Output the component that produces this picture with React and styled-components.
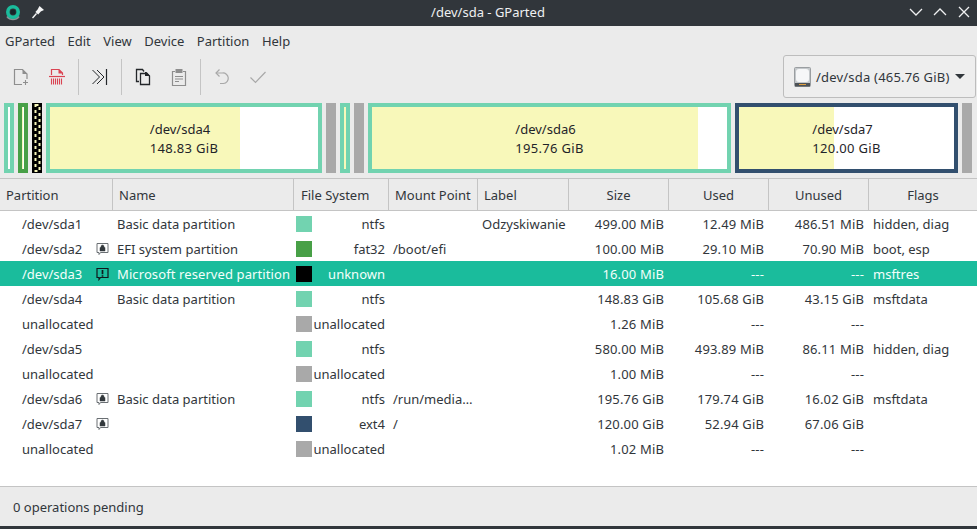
import React from 'react';
import styled, { createGlobalStyle } from 'styled-components';

const GlobalStyle = createGlobalStyle`
  html, body { margin: 0; padding: 0; height: 100%; overflow: hidden; }
  #root { height: 100%; }
  * { box-sizing: border-box; }
`;

const COLUMNS = '113px 181px 95px 89px 91px 100px 100px 100px 1fr';
const TEAL = '#72d3b0';
const GREEN = '#48a047';
const NAVY = '#324f6e';
const GREY = '#a9a9a9';
const USED = '#f8f8ba';

// Window shell
const Window = styled.div`
  display: flex;
  flex-direction: column;
  height: 100vh;
  background: #ebebeb;
  color: #31363b;
  font-family: 'Noto Sans', sans-serif;
  font-size: 13px;
  border-bottom: 3px solid #31363b;
`;

const TitleBar = styled.header`
  display: grid;
  grid-template-columns: 1fr auto 1fr;
  align-items: center;
  height: 26px;
  padding: 0 5px 3px 4px;
  background: #31363b;
  color: #eff0f1;
`;

const TitleLeft = styled.div`
  display: flex;
  align-items: center;
  gap: 9px;
`;

const TitleRight = styled.div`
  display: flex;
  align-items: center;
  justify-content: flex-end;
  gap: 8px;
`;

const MenuBar = styled.nav`
  display: flex;
  align-items: center;
  gap: 12.5px;
  height: 29px;
  padding: 1px 0 0 5px;
`;

const MenuItem = styled.span`
  line-height: 18px;
`;

const ToolRow = styled.div`
  display: flex;
  justify-content: space-between;
  height: 44px;
  padding: 0 1px 0 3px;
`;

const ToolGroup = styled.div`
  display: flex;
  align-items: center;
`;

const ToolButton = styled.div`
  display: flex;
  align-items: center;
  justify-content: center;
  width: 36px;
  height: 44px;
`;

const ToolSeparator = styled.div`
  width: 1px;
  height: 36px;
  margin: 0 3px;
  background: #c4c4c4;
`;

const DeviceCombo = styled.div`
  display: flex;
  align-items: center;
  width: 193px;
  height: 43px;
  padding: 0 0 0 10px;
  border: 1px solid #bdbdbd;
  border-radius: 3px;
  background: #eeeeee;
`;

const DeviceLabel = styled.span`
  margin: 0 5px 0 5px;
  white-space: nowrap;
  letter-spacing: 0.2px;
`;

const ComboArrow = styled.span`
  width: 0;
  height: 0;
  border-left: 5px solid transparent;
  border-right: 5px solid transparent;
  border-top: 5px solid #31363b;
`;

// Partition map
const DiskMap = styled.section`
  display: flex;
  gap: 4px;
  height: 70px;
  margin: 4px 0 5px;
  padding-left: 4px;
`;

const Segment = styled.div`
  display: flex;
  align-items: center;
  justify-content: center;
  flex: none;
  width: ${(p) => p.$width}px;
  border: ${(p) => (p.$solid ? 0 : 4)}px solid ${(p) => p.$color};
  background: ${(p) =>
    p.$solid
      ? p.$color
      : `linear-gradient(to right, ${USED} ${p.$used}px, #ffffff ${p.$used}px)`};
  color: #1f2429;
  line-height: 19px;
`;

const SegmentLabel = styled.div`
  padding-top: 2px;
  white-space: nowrap;
  text-align: left;
`;

const SegmentSize = styled.span`
  letter-spacing: 0.3px;
`;

const HatchedSegment = styled.svg`
  display: block;
  flex: none;
  width: 10px;
  height: 70px;
`;

// Table
const Table = styled.section`
  display: flex;
  flex-direction: column;
  flex: 1;
  min-height: 0;
  background: #ffffff;
  border-bottom: 1px solid #c4c4c4;
`;

const HeaderRow = styled.div`
  display: grid;
  grid-template-columns: ${COLUMNS};
  height: 33px;
  background: #ebebeb;
  border-top: 1px solid #c4c4c4;
  border-bottom: 1px solid #c4c4c4;
`;

const HeaderCell = styled.div`
  display: flex;
  align-items: center;
  justify-content: ${(p) => (p.$center ? 'center' : 'flex-start')};
  padding-left: ${(p) => (p.$center ? 0 : p.$pad || 6)}px;
  border-right: ${(p) => (p.$last ? 0 : 1)}px solid #c4c4c4;
`;

const Row = styled.div`
  display: grid;
  grid-template-columns: ${COLUMNS};
  align-items: center;
  height: 25px;
  background: ${(p) => (p.$selected ? '#1abc9c' : 'transparent')};
  color: ${(p) => (p.$selected ? '#f4fffb' : '#31363b')};
`;

const Cell = styled.div`
  display: flex;
  align-items: center;
  justify-content: ${(p) => (p.$right ? 'flex-end' : 'flex-start')};
  height: 25px;
  padding: ${(p) => (p.$right ? '0 5px 0 0' : '0 0 0 4px')};
  white-space: nowrap;
  overflow: hidden;
  letter-spacing: ${(p) => p.$spacing || 0}px;
`;

const PartitionCell = styled(Cell)`
  justify-content: space-between;
  padding: 0 4px 0 22px;
`;

const FsCell = styled(Cell)`
  justify-content: space-between;
  padding: 0 4px 0 2px;
`;

const Swatch = styled.span`
  flex: none;
  width: 16px;
  height: 16px;
  background: ${(p) => p.$color};
`;

const Footer = styled.footer`
  display: flex;
  align-items: center;
  height: 39px;
  padding-left: 13px;
`;

// Icons
const Svg = ({ children, w = 18, h = 18 }) => (
  <svg width={w} height={h} viewBox={`0 0 ${w} ${h}`} fill="none">
    {children}
  </svg>
);

const AppLogo = () => (
  <Svg w={18} h={18}>
    <path d="M15 13.5a7.6 7.6 0 0 1-12 0" stroke="#8b9296" strokeWidth="1.8" />
    <circle cx="9" cy="9" r="5.2" stroke="#1abc9c" strokeWidth="3.6" />
    <circle cx="9" cy="9" r="2.6" fill="#17252a" />
  </Svg>
);

const PinIcon = () => (
  <Svg w={14} h={14}>
    <path d="M8.5 1l4.5 4-3.2 1.6-2.6 2.8L4.4 7l2.2-2.4z" fill="#f4f5f5" />
    <path d="M5.5 8.5L1.5 13" stroke="#f4f5f5" strokeWidth="1.4" />
  </Svg>
);

const WinButton = ({ d }) => (
  <Svg w={16} h={16}>
    <path d={d} stroke="#eff0f1" strokeWidth="1.3" />
  </Svg>
);

const NewIcon = () => (
  <Svg>
    <path d="M10 16.5H2.5v-15h8l4.5 4.5v5" stroke="#8e8e8e" strokeWidth="1.2" />
    <path d="M10.5 1.5l4.5 4.5h-4.5z" fill="#8e8e8e" />
    <path d="M13.5 12v5M11 14.5h5" stroke="#8e8e8e" strokeWidth="1.1" />
  </Svg>
);

const DeleteIcon = () => (
  <Svg>
    <path d="M3.5 7V1.5h7.5l3.5 3.5v2" stroke="#da4453" strokeWidth="1.2" />
    <path d="M10.5 1l4.5 4.5h-4.5z" fill="#da4453" />
    <path d="M1 8.5h16" stroke="#da4453" strokeWidth="1.2" />
    <path
      d="M3.5 10.5v6M5.5 10.5v6M7.5 10.5v6M9.5 10.5v6M11.5 10.5v6M13.5 10.5v6"
      stroke="#da4453"
      strokeWidth="1.1"
    />
  </Svg>
);

const ApplyIcon = () => (
  <Svg>
    <path d="M1.5 2l7 7-7 7M6 2l7 7-7 7" stroke="#232629" strokeWidth="1" />
    <path d="M15.5 1v16" stroke="#232629" strokeWidth="1.2" />
  </Svg>
);

const CopyIcon = () => (
  <Svg>
    <path d="M5 13.5H2.5v-12h6l1.5 2" stroke="#232629" strokeWidth="1.3" />
    <path d="M6.5 5.5v11h9V8l-2.5-2.5z" stroke="#232629" strokeWidth="1.3" />
    <path d="M11 4h1.5l3.5 4h-5z" fill="#232629" />
  </Svg>
);

const PasteIcon = () => (
  <Svg>
    <path d="M5 3.5H2.5v14h13v-14H13" stroke="#8e8e8e" strokeWidth="1.2" />
    <path d="M5.5 1h7v4h-7z" fill="#8e8e8e" />
    <path d="M5 8.5h8M5 11h8M5 13.5h4" stroke="#8e8e8e" strokeWidth="1.1" />
  </Svg>
);

const UndoIcon = () => (
  <Svg>
    <path d="M6.5 1.5L3 5l3.5 3.5" stroke="#a8a8a8" strokeWidth="1.2" />
    <path d="M3 5h6.5a5 5 0 0 1 1 10.5H7" stroke="#a8a8a8" strokeWidth="1.2" />
  </Svg>
);

const CheckIcon = () => (
  <Svg>
    <path d="M1.5 9.5L6.5 14.5 16.5 4" stroke="#a8a8a8" strokeWidth="1.2" />
  </Svg>
);

const DiskIcon = () => (
  <Svg w={17} h={20}>
    <rect x="0.5" y="0.5" width="16" height="19" rx="1" fill="#c4c8cb" stroke="#9a9ea1" />
    <rect x="2" y="2" width="13" height="13" rx="3" fill="#f6f7f8" />
    <rect x="1" y="16" width="15" height="3.5" fill="#4d5257" />
    <path d="M5 17.5h7" stroke="#e0a040" strokeWidth="1" />
  </Svg>
);

const BusyIcon = ({ warning }) => (
  <Svg w={13} h={14}>
    <path d="M1 1.5h11v9H4.5L3 12.5v-2H1z" stroke={warning ? '#10181c' : '#6a6f73'} strokeWidth={warning ? 1.2 : 1} />
    {warning ? (
      <path d="M6.5 3v4.3M6.5 8.3v1.4" stroke="#10181c" strokeWidth="1.7" />
    ) : (
      <path d="M4 5.5h5v3.5H4zM5 5.5V4.5a1.5 1.5 0 0 1 3 0v1" fill="#33383c" stroke="#33383c" strokeWidth="0.5" />
    )}
  </Svg>
);

const HEADERS = [
  { title: 'Partition' },
  { title: 'Name' },
  { title: 'File System', pad: 7 },
  { title: 'Mount Point' },
  { title: 'Label' },
  { title: 'Size', center: true },
  { title: 'Used', center: true },
  { title: 'Unused', center: true },
  { title: 'Flags', center: true },
];

const ROWS = [
  { part: '/dev/sda1', name: 'Basic data partition', color: TEAL, fs: 'ntfs', label: 'Odzyskiwanie', size: '499.00 MiB', used: '12.49 MiB', unused: '486.51 MiB', flags: 'hidden, diag' },
  { part: '/dev/sda2', icon: 'lock', name: 'EFI system partition', color: GREEN, fs: 'fat32', mount: '/boot/efi', size: '100.00 MiB', used: '29.10 MiB', unused: '70.90 MiB', flags: 'boot, esp' },
  { part: '/dev/sda3', icon: 'warn', selected: true, name: 'Microsoft reserved partition', color: '#000000', fs: 'unknown', size: '16.00 MiB', used: '---', unused: '---', flags: 'msftres' },
  { part: '/dev/sda4', name: 'Basic data partition', color: TEAL, fs: 'ntfs', size: '148.83 GiB', used: '105.68 GiB', unused: '43.15 GiB', flags: 'msftdata' },
  { part: 'unallocated', color: GREY, fs: 'unallocated', size: '1.26 MiB', used: '---', unused: '---' },
  { part: '/dev/sda5', color: TEAL, fs: 'ntfs', size: '580.00 MiB', used: '493.89 MiB', unused: '86.11 MiB', flags: 'hidden, diag' },
  { part: 'unallocated', color: GREY, fs: 'unallocated', size: '1.00 MiB', used: '---', unused: '---' },
  { part: '/dev/sda6', icon: 'lock', name: 'Basic data partition', color: TEAL, fs: 'ntfs', mount: '/run/media…', size: '195.76 GiB', used: '179.74 GiB', unused: '16.02 GiB', flags: 'msftdata' },
  { part: '/dev/sda7', icon: 'lock', color: NAVY, fs: 'ext4', mount: '/', size: '120.00 GiB', used: '52.94 GiB', unused: '67.06 GiB' },
  { part: 'unallocated', color: GREY, fs: 'unallocated', size: '1.02 MiB', used: '---', unused: '---' },
];

const App = () => (
  <Window>
    <GlobalStyle />
    <TitleBar>
      <TitleLeft>
        <AppLogo />
        <PinIcon />
      </TitleLeft>
      <span>/dev/sda - GParted</span>
      <TitleRight>
        <WinButton d="M2 5l6 6 6-6" />
        <WinButton d="M2 11l6-6 6 6" />
        <WinButton d="M3 3l10 10M13 3L3 13" />
      </TitleRight>
    </TitleBar>

    <MenuBar>
      {['GParted', 'Edit', 'View', 'Device', 'Partition', 'Help'].map((item) => (
        <MenuItem key={item}>{item}</MenuItem>
      ))}
    </MenuBar>

    <ToolRow>
      <ToolGroup>
        <ToolButton><NewIcon /></ToolButton>
        <ToolButton><DeleteIcon /></ToolButton>
        <ToolSeparator />
        <ToolButton><ApplyIcon /></ToolButton>
        <ToolSeparator />
        <ToolButton><CopyIcon /></ToolButton>
        <ToolButton><PasteIcon /></ToolButton>
        <ToolSeparator />
        <ToolButton><UndoIcon /></ToolButton>
        <ToolButton><CheckIcon /></ToolButton>
      </ToolGroup>
      <DeviceCombo>
        <DiskIcon />
        <DeviceLabel>/dev/sda (465.76 GiB)</DeviceLabel>
        <ComboArrow />
      </DeviceCombo>
    </ToolRow>

    <DiskMap>
      <Segment $width={10} $color={TEAL} $used={0} />
      <Segment $width={10} $color={GREEN} $used={1} />
      <HatchedSegment viewBox="0 0 10 70">
        <rect width="10" height="70" fill="#000000" />
        <rect x="3.5" y="2" width="4" height="66" stroke="#f8f8ba" strokeWidth="2" strokeDasharray="3 3" />
      </HatchedSegment>
      <Segment $width={276} $color={TEAL} $used={190}>
        <SegmentLabel>/dev/sda4<br /><SegmentSize>148.83 GiB</SegmentSize></SegmentLabel>
      </Segment>
      <Segment $width={10} $color={GREY} $solid />
      <Segment $width={10} $color={TEAL} $used={2} />
      <Segment $width={10} $color={GREY} $solid />
      <Segment $width={363} $color={TEAL} $used={326}>
        <SegmentLabel>/dev/sda6<br /><SegmentSize>195.76 GiB</SegmentSize></SegmentLabel>
      </Segment>
      <Segment $width={223} $color={NAVY} $used={95}>
        <SegmentLabel>/dev/sda7<br /><SegmentSize>120.00 GiB</SegmentSize></SegmentLabel>
      </Segment>
      <Segment $width={10} $color={GREY} $solid />
    </DiskMap>

    <Table>
      <HeaderRow>
        {HEADERS.map(({ title, center, pad }, index) => (
          <HeaderCell key={title} $center={center} $pad={pad} $last={index === HEADERS.length - 1}>
            {title}
          </HeaderCell>
        ))}
      </HeaderRow>
      {ROWS.map((row, index) => (
        <Row key={index} $selected={row.selected}>
          <PartitionCell>
            <span>{row.part}</span>
            {row.icon && <BusyIcon warning={row.icon === 'warn'} />}
          </PartitionCell>
          <Cell $spacing={row.selected ? 0.1 : 0}>{row.name}</Cell>
          <FsCell>
            <Swatch $color={row.color} />
            <span>{row.fs}</span>
          </FsCell>
          <Cell>{row.mount}</Cell>
          <Cell>{row.label}</Cell>
          <Cell $right $spacing={0.15}>{row.size}</Cell>
          <Cell $right $spacing={0.15}>{row.used}</Cell>
          <Cell $right $spacing={0.15}>{row.unused}</Cell>
          <Cell>{row.flags}</Cell>
        </Row>
      ))}
    </Table>

    <Footer>0 operations pending</Footer>
  </Window>
);

export default App;
